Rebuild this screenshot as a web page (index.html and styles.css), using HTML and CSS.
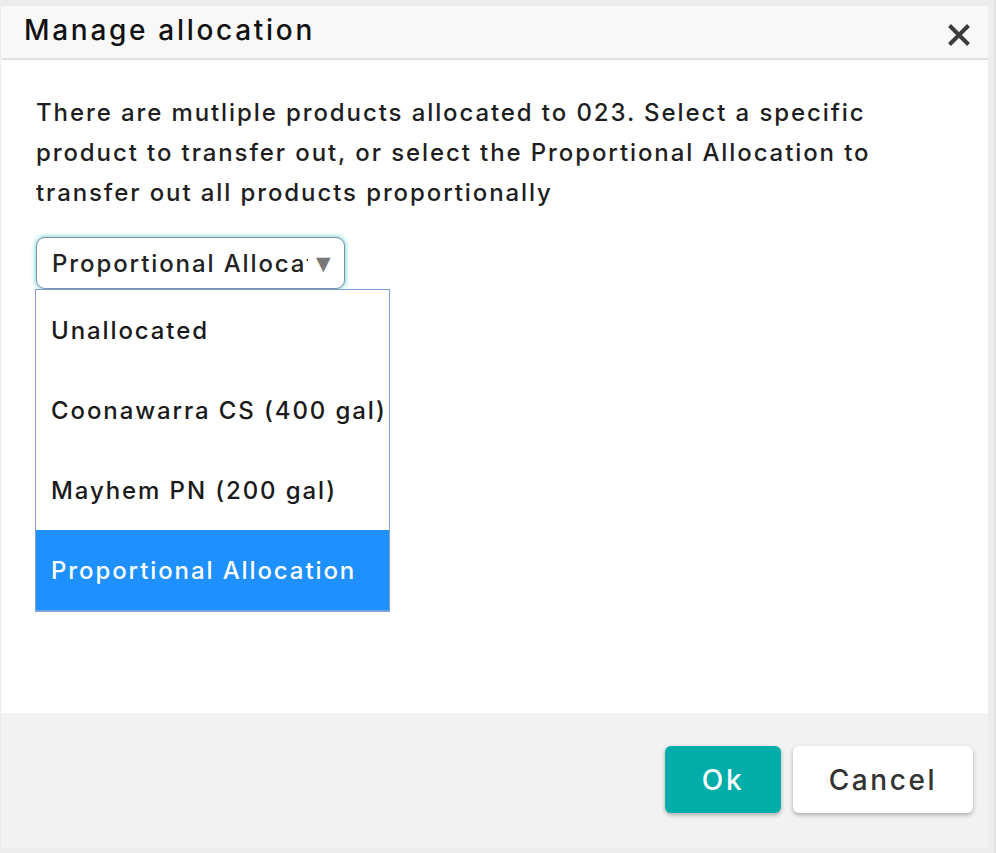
FILE: index.html
```html
<!DOCTYPE html>
<html lang="en">
<head>
<meta charset="utf-8">
<title>Manage allocation</title>
<link rel="stylesheet" href="styles.css">
</head>
<body>
<div class="page">
  <div class="dialog">
    <div class="dialog-header">
      <h1 class="dialog-title">Manage allocation</h1>
      <button class="close-btn" aria-label="Close">
        <svg width="24" height="22" viewBox="0 0 24 22"><path d="M2.5 1.5 L21.5 20.5 M21.5 1.5 L2.5 20.5" stroke="#3c3c3c" stroke-width="4" stroke-linecap="butt" fill="none"/></svg>
      </button>
    </div>
    <div class="dialog-body">
      <p class="message">There are mutliple products allocated to 023. Select a specific product to transfer out, or select the Proportional Allocation to transfer out all products proportionally</p>
      <div class="select-wrap">
        <div class="select">
          <span class="select-value">Proportional Allocation</span>
          <span class="select-arrow">&#9660;</span>
        </div>
        <ul class="options">
          <li class="option">Unallocated</li>
          <li class="option">Coonawarra CS (400 gal)</li>
          <li class="option">Mayhem PN (200 gal)</li>
          <li class="option selected">Proportional Allocation</li>
        </ul>
      </div>
    </div>
    <div class="dialog-footer">
      <button class="btn btn-ok">Ok</button>
      <button class="btn btn-cancel">Cancel</button>
    </div>
  </div>
  <div class="side-strip"></div>
</div>
</body>
</html>
```
FILE: styles.css
```css
html, body {
  margin: 0;
  padding: 0;
  background: #ececec;
}
body {
  font-family: Inter, "Noto Sans", sans-serif;
  font-weight: 500;
  color: #1e1e1e;
}
.page {
  display: flex;
  height: 853px;
  overflow: hidden;
}
.dialog {
  margin: 6px 0 0 1px;
  width: 987px;
  height: 842px;
  display: flex;
  flex-direction: column;
  background: #fff;
}
.side-strip {
  flex: 1;
  background: #ededed;
  border-right: 2px solid #e2e2e2;
}
.dialog-header {
  height: 52px;
  background: #f8f8f8;
  border-bottom: 2px solid #e0e0e0;
  display: flex;
  align-items: center;
  justify-content: space-between;
  padding: 0 17px 0 23px;
}
.dialog-title {
  margin: 0;
  font-size: 28px;
  font-weight: 500;
  letter-spacing: 2.7px;
  color: #111;
  line-height: 1;
  padding-bottom: 4px;
}
.close-btn {
  border: 0;
  background: none;
  padding: 0;
  margin-top: 6px;
  display: flex;
  filter: blur(0.4px);
}
.dialog-body {
  flex: 1;
  padding: 33px 35px 0 35px;
}
.message {
  margin: 0;
  font-size: 24px;
  line-height: 40px;
  letter-spacing: 1.9px;
  color: #1e1e1e;
}
.select-wrap {
  position: relative;
  margin-top: 24px;
  width: 309px;
}
.select {
  height: 52px;
  box-sizing: border-box;
  border: 1.5px solid #7d8fab;
  border-radius: 9px;
  box-shadow: 0 0 4px 1px #7fdcd8;
  display: flex;
  align-items: center;
  padding: 0 0 0 15px;
  background: #fff;
}
.select-value {
  flex: none;
  width: 256px;
  overflow: hidden;
  white-space: nowrap;
  font-size: 24px;
  letter-spacing: 1.9px;
  color: #222;
}
.select-arrow {
  font-size: 19px;
  color: #777;
  margin-left: 8px;
  font-family: "DejaVu Sans", sans-serif;
}
.options {
  position: absolute;
  top: 52px;
  left: -1px;
  width: 355px;
  box-sizing: border-box;
  margin: 0;
  padding: 0;
  list-style: none;
  border: 1px solid #7f9fd9;
  border-bottom-width: 2px;
  background: #fff;
}
.option {
  height: 80px;
  display: flex;
  align-items: center;
  padding-left: 15px;
  font-size: 24px;
  letter-spacing: 1.9px;
  color: #1a1a1a;
  white-space: nowrap;
}
.option.selected {
  background: #1e90ff;
  color: #fff;
}
.dialog-footer {
  height: 135px;
  box-sizing: border-box;
  background: #f2f2f2;
  display: flex;
  justify-content: flex-end;
  align-items: flex-start;
  gap: 12px;
  padding: 33px 15px 0 0;
}
.btn {
  height: 67px;
  border: 0;
  border-radius: 6px;
  font-family: Inter, "Noto Sans", sans-serif;
  font-weight: 500;
  font-size: 28px;
  letter-spacing: 2.6px;
  box-shadow: 0 2px 4px rgba(0,0,0,0.3);
}
.btn-ok {
  width: 116px;
  background: #00ada8;
  color: #fff;
}
.btn-cancel {
  width: 180px;
  background: #fff;
  color: #333;
}
```
